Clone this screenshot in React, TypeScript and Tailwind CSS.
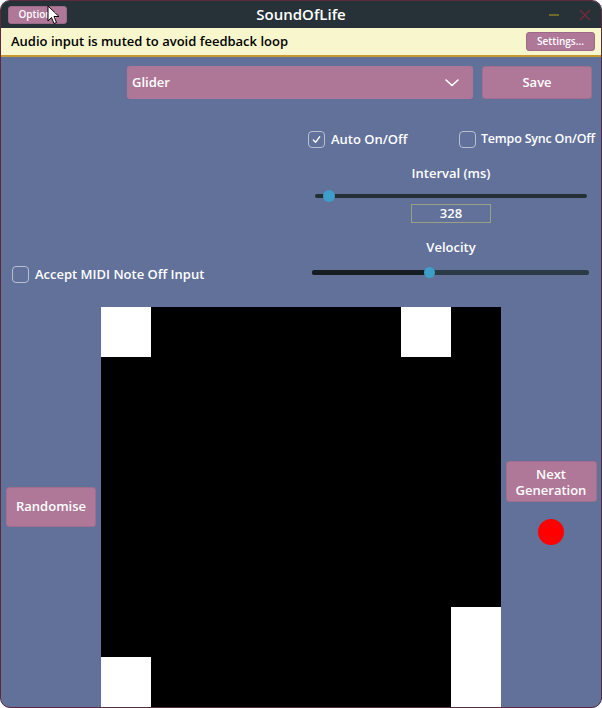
import React from "react";

const cells: [number, number][] = [
  [0, 0],
  [0, 6],
  [6, 7],
  [7, 7],
  [7, 0],
];

function Checkbox({ checked }: { checked?: boolean }) {
  return (
    <div className="shrink-0 w-[17px] h-[17px] rounded-[4px] border border-[#b8bfd0] flex items-center justify-center">
      {checked && (
        <svg width="11" height="11" viewBox="0 0 12 12" fill="none">
          <path d="M2.5 6.5 L5 9 L9.5 3" stroke="white" strokeWidth="1.4" strokeLinecap="round" strokeLinejoin="round" />
        </svg>
      )}
    </div>
  );
}

export default function App() {
  const alive = (r: number, c: number) => cells.some(([a, b]) => a === r && b === c);

  return (
    <div
      className="relative w-[602px] h-[708px] rounded-[10px] border border-[#5c2a3c] overflow-hidden flex flex-col bg-[#61719a] text-white"
      style={{ fontFamily: '"Open Sans", "Noto Sans", sans-serif' }}
    >
      {/* Title bar */}
      <div className="h-[27px] bg-[#263238] flex items-center relative shrink-0">
        <button className="ml-[7px] w-[59px] h-[18px] rounded-[3px] bg-[#b07898] border border-[#9c6a88] text-[10px] font-semibold flex items-center justify-center">
          Options
        </button>
        <div className="absolute left-0 right-0 text-center text-[15px] font-semibold pointer-events-none">SoundOfLife</div>
        <div className="ml-auto flex items-center gap-[20px] mr-[10px]">
          <div className="w-[10px] h-[2px] bg-[#6f6a2c]" />
          <svg width="12" height="12" viewBox="0 0 12 12">
            <path d="M1 1 L11 11 M11 1 L1 11" stroke="#6e2a38" strokeWidth="1.6" />
          </svg>
        </div>
        <svg className="absolute left-[46px] top-[4px]" width="14" height="20" viewBox="0 0 14 20">
          <path d="M1 1 L1 16 L4.5 12.5 L7 18.5 L9.5 17.5 L7 11.5 L12 11.5 Z" fill="white" stroke="black" strokeWidth="1" strokeLinejoin="round" />
        </svg>
      </div>

      {/* Banner */}
      <div className="h-[29px] bg-[#f7f6cc] border-b-[2px] border-[#c89a2e] flex items-center shrink-0">
        <span className="ml-[10px] text-[13px] font-semibold text-black">Audio input is muted to avoid feedback loop</span>
        <button className="ml-auto mr-[6px] w-[69px] h-[19px] rounded-[3px] bg-[#b07898] border border-[#9c6a88] text-[10px] font-semibold flex items-center justify-center">
          Settings...
        </button>
      </div>

      {/* Controls */}
      <div className="h-[250px] shrink-0 flex flex-col">
        <div className="mt-[9px] h-[33px] flex pl-[126px] pr-[9px] gap-[9px]">
          <div className="flex-1 rounded-[3px] bg-[#ae7797] flex items-center pl-[5px] pr-[14px] text-[13px] font-semibold">
            <span>Glider</span>
            <svg className="ml-auto" width="14" height="8" viewBox="0 0 14 8" fill="none">
              <path d="M1 1 L7 6.5 L13 1" stroke="white" strokeWidth="1.6" strokeLinecap="round" strokeLinejoin="round" />
            </svg>
          </div>
          <button className="w-[110px] rounded-[3px] bg-[#b07898] border border-[#a06d8d] text-[13px] font-semibold">Save</button>
        </div>

        <div className="mt-[32px] h-[17px] flex items-center text-[13px] font-semibold whitespace-nowrap">
          <div className="ml-[307px] w-[151px] flex items-center gap-[6px]">
            <Checkbox checked />
            <span>Auto On/Off</span>
          </div>
          <div className="flex items-center gap-[5px]">
            <Checkbox />
            <span className="text-[12.5px] tracking-[-0.2px]">Tempo Sync On/Off</span>
          </div>
        </div>

        <div className="flex flex-1">
          <div className="w-[304px] flex items-start">
            <div className="mt-[117px] ml-[11px] flex items-center gap-[6px] text-[13px] font-semibold whitespace-nowrap">
              <Checkbox />
              <span>Accept MIDI Note Off Input</span>
            </div>
          </div>
          <div className="w-[292px] flex flex-col items-center text-[13px] font-semibold">
            <div className="mt-[17px] h-[16px] leading-[16px]">Interval (ms)</div>
            <div className="mt-[8px] h-[14px] w-[272px] ml-[-1px] relative flex items-center">
              <div className="w-full h-[4px] rounded-full bg-[#232f35]" />
              <div className="absolute left-[8px] w-[12px] h-[12px] rounded-full bg-[#3d9fc9]" />
            </div>
            <div className="mt-[1px] w-[80px] h-[19px] border border-[#9aa084] flex items-center justify-center text-[13px]">328</div>
            <div className="mt-[16px] h-[16px] leading-[16px]">Velocity</div>
            <div className="mt-[10px] h-[14px] w-[277px] ml-[-2px] relative flex items-center">
              <div className="w-full h-[5px] rounded-full bg-[#2b3a44]" />
              <div className="absolute left-0 w-[117px] h-[5px] rounded-full bg-[#151d22]" />
              <div className="absolute left-[112px] w-[11px] h-[11px] rounded-full bg-[#3d9fc9]" />
            </div>
          </div>
        </div>
      </div>

      {/* Board */}
      <div className="flex h-[400px] shrink-0">
        <div className="w-[100px] flex items-center justify-center">
          <button className="w-[90px] h-[40px] rounded-[3px] bg-[#b07898] border border-[#a06d8d] text-[13px] font-semibold">Randomise</button>
        </div>
        <div className="w-[400px] h-[400px] grid grid-cols-8 grid-rows-8 bg-black">
          {Array.from({ length: 64 }).map((_, i) => (
            <div key={i} className={alive(Math.floor(i / 8), i % 8) ? "bg-white" : "bg-black"} />
          ))}
        </div>
        <div className="w-[100px] flex flex-col items-center justify-center pb-[8px]">
          <button className="w-[91px] h-[41px] rounded-[3px] bg-[#b07898] border border-[#a06d8d] text-[13px] font-semibold flex flex-col items-center justify-center leading-[16px]">
            <span>Next</span>
            <span>Generation</span>
          </button>
          <div className="mt-[17px] w-[26px] h-[26px] rounded-full bg-[#ff0000]" />
        </div>
      </div>
    </div>
  );
}
